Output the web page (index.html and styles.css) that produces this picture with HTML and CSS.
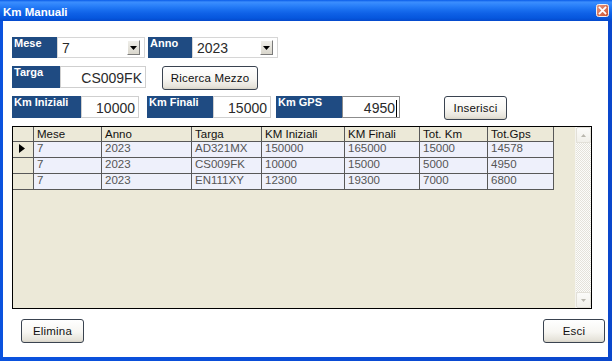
FILE: index.html
```html
<!DOCTYPE html>
<html>
<head>
<meta charset="utf-8">
<title>Km Manuali</title>
<link rel="stylesheet" href="styles.css">
</head>
<body>
<div class="window">
  <div class="titlebar">
    <span class="title">Km Manuali</span>
    <span class="close">
      <svg width="13" height="13" viewBox="0 0 13 13">
        <defs>
          <linearGradient id="cg" x1="0" y1="0" x2="1" y2="1">
            <stop offset="0" stop-color="#E99A82"/>
            <stop offset="1" stop-color="#C9502F"/>
          </linearGradient>
        </defs>
        <rect x="0.5" y="0.5" width="12" height="12" rx="2" fill="url(#cg)" stroke="#F4F0EE"/>
        <path d="M3.6 3.6 L9.4 9.4 M9.4 3.6 L3.6 9.4" stroke="#fff" stroke-width="1.8" stroke-linecap="square"/>
      </svg>
    </span>
  </div>
  <div class="client">
    <div class="row row1">
      <div class="label lb-mese">Mese</div>
      <div class="combo cb-mese">
        <span class="val">7</span>
        <span class="dd"><svg width="7" height="4" viewBox="0 0 7 4"><polygon points="0,0 7,0 3.5,4" fill="#000"/></svg></span>
      </div>
      <div class="label lb-anno">Anno</div>
      <div class="combo cb-anno">
        <span class="val">2023</span>
        <span class="dd"><svg width="7" height="4" viewBox="0 0 7 4"><polygon points="0,0 7,0 3.5,4" fill="#000"/></svg></span>
      </div>
    </div>
    <div class="row row2">
      <div class="label lb-targa">Targa</div>
      <div class="field fd-targa">CS009FK</div>
      <div class="btn bt-ricerca">Ricerca Mezzo</div>
    </div>
    <div class="row row3">
      <div class="label lb-kmi">Km Iniziali</div>
      <div class="field fd-km">10000</div>
      <div class="label lb-kmf">Km Finali</div>
      <div class="field fd-km">15000</div>
      <div class="label lb-gps">Km GPS</div>
      <div class="field fd-km fd-gps">4950<span class="caret"></span></div>
      <div class="btn bt-inserisci">Inserisci</div>
    </div>
    <div class="grid">
      <div class="gtable">
        <div class="hc rh"></div>
        <div class="hc">Mese</div>
        <div class="hc">Anno</div>
        <div class="hc">Targa</div>
        <div class="hc">KM Iniziali</div>
        <div class="hc">KM Finali</div>
        <div class="hc">Tot. Km</div>
        <div class="hc">Tot.Gps</div>

        <div class="dc rh"><svg class="cur" width="6" height="9" viewBox="0 0 6 9"><polygon points="0,0 6,4.5 0,9" fill="#000"/></svg></div>
        <div class="dc">7</div>
        <div class="dc">2023</div>
        <div class="dc">AD321MX</div>
        <div class="dc">150000</div>
        <div class="dc">165000</div>
        <div class="dc">15000</div>
        <div class="dc">14578</div>

        <div class="dc rh"></div>
        <div class="dc">7</div>
        <div class="dc">2023</div>
        <div class="dc">CS009FK</div>
        <div class="dc">10000</div>
        <div class="dc">15000</div>
        <div class="dc">5000</div>
        <div class="dc">4950</div>

        <div class="dc rh"></div>
        <div class="dc">7</div>
        <div class="dc">2023</div>
        <div class="dc">EN111XY</div>
        <div class="dc">12300</div>
        <div class="dc">19300</div>
        <div class="dc">7000</div>
        <div class="dc">6800</div>
      </div>
      <div class="gspace"></div>
      <div class="vscroll">
        <div class="sbtn"><svg width="5" height="3" viewBox="0 0 5 3"><polygon points="0,3 5,3 2.5,0" fill="#B9B7AE"/></svg></div>
        <div class="strack"></div>
        <div class="sbtn"><svg width="5" height="3" viewBox="0 0 5 3"><polygon points="0,0 5,0 2.5,3" fill="#B9B7AE"/></svg></div>
      </div>
    </div>
    <div class="btnrow">
      <div class="btn bt-elimina">Elimina</div>
      <div class="btn bt-esci">Esci</div>
    </div>
  </div>
</div>
</body>
</html>
```

FILE: styles.css
```css
html, body {
  margin: 0;
  padding: 0;
}
body {
  width: 612px;
  height: 361px;
  overflow: hidden;
  font-family: "Liberation Sans", Arial, sans-serif;
}
.window {
  width: 612px;
  height: 361px;
  display: flex;
  flex-direction: column;
  background: linear-gradient(90deg, #0A52DE 0%, #0A4CD6 50%, #0A47CC 100%);
}
.titlebar {
  height: 21px;
  flex: none;
  display: flex;
  justify-content: space-between;
  align-items: flex-start;
  padding: 0 3px;
  background: linear-gradient(180deg, #0A5CE8 0%, #3C8EFD 10%, #2C82FA 25%, #1A70F0 45%, #0E60E6 65%, #0657DE 85%, #0449CC 100%);
}
.title {
  color: #fff;
  font-weight: bold;
  font-size: 11.5px;
  line-height: 18px;
  padding-top: 3px;
}
.close {
  margin-top: 4px;
  width: 13px;
  height: 13px;
}
.close svg {
  display: block;
}
.client {
  flex: 1;
  background: #fff;
  margin: 0 4px 4px 3px;
  padding: 16px 0 0 9px;
  display: flex;
  flex-direction: column;
}
.row {
  display: flex;
  align-items: flex-start;
}
.row2 {
  margin-top: 8px;
}
.row3 {
  margin-top: 6px;
}
.label {
  box-sizing: border-box;
  background: #1F4B82;
  color: #fff;
  font-weight: bold;
  font-size: 11px;
  line-height: 13px;
  padding: 0 2px;
  height: 22px;
}
.lb-mese { width: 45px; height: 21px; }
.lb-anno { width: 44px; height: 21px; margin-left: 3px; }
.lb-targa { width: 48px; }
.lb-kmi { width: 69px; }
.lb-kmf { width: 66px; margin-left: 8px; }
.lb-gps { width: 66px; margin-left: 5px; }

.combo {
  box-sizing: border-box;
  display: flex;
  align-items: flex-start;
  background: #fff;
  border: 1px solid #D6D6D6;
  height: 21px;
}
.cb-mese { width: 88px; }
.cb-anno { width: 86px; }
.combo .val {
  flex: 1;
  font-size: 14px;
  line-height: 18px;
  padding: 1px 0 0 4px;
  color: #2A2A2A;
}
.dd {
  box-sizing: border-box;
  width: 13px;
  height: 15px;
  margin: 2px 4px 0 0;
  border: 1px solid;
  border-color: #fff #7A7A7A #7A7A7A #fff;
  background: linear-gradient(#F0EFEA, #D9D6CC);
  display: flex;
  align-items: center;
  justify-content: center;
}
.dd svg {
  display: block;
}
.field {
  box-sizing: border-box;
  background: #fff;
  border: 1px solid #CFCFCF;
  height: 22px;
  font-size: 14px;
  line-height: 18px;
  padding: 2px 3px 0 0;
  text-align: right;
  color: #2A2A2A;
  white-space: nowrap;
}
.fd-targa { width: 86px; }
.fd-km { width: 58px; }
.fd-gps {
  border-color: #8C8C8C;
  padding-right: 2px;
}
.caret {
  display: inline-block;
  width: 1px;
  height: 17px;
  background: #000;
  vertical-align: -4px;
  margin-left: 1px;
}
.btn {
  box-sizing: border-box;
  height: 24px;
  border: 1px solid #3A4350;
  border-radius: 3px;
  background: linear-gradient(180deg, #FFFFFF 0%, #F7F6F2 55%, #E6E3DA 90%, #D6D2C6 100%);
  font-size: 11.5px;
  letter-spacing: 0.2px;
  color: #111;
  display: flex;
  align-items: center;
  justify-content: center;
}
.bt-ricerca { width: 96px; margin-left: 16px; }
.bt-inserisci { width: 63px; margin-left: 44px; }
.bt-elimina { width: 63px; }
.bt-esci { width: 62px; }

.grid {
  margin-top: 6px;
  width: 580px;
  height: 183px;
  box-sizing: border-box;
  border: 1px solid #000;
  background: #ECE9D8;
  display: flex;
}
.gtable {
  flex: none;
  width: 541px;
  display: grid;
  grid-template-columns: 21px 68px 90px 70px 83px 75px 68px 66px;
  grid-template-rows: 15px;
  grid-auto-rows: 16px;
  align-content: start;
}
.hc, .dc {
  box-sizing: border-box;
  border-right: 1px solid #585858;
  border-bottom: 1px solid #585858;
  padding-left: 3px;
  font-size: 11.5px;
  white-space: nowrap;
  overflow: hidden;
}
.hc {
  background: #ECE9D8;
  color: #111;
  line-height: 14px;
}
.dc {
  background: #EEF0FB;
  color: #555;
  line-height: 13px;
}
.dc.rh, .hc.rh {
  background: #ECE9D8;
}
.cur {
  display: block;
  margin: 2px 0 0 3px;
}
.gspace {
  flex: 1;
}
.vscroll {
  width: 15px;
  flex: none;
  display: flex;
  flex-direction: column;
  background: repeating-conic-gradient(#E4E2DA 0 25%, #FCFCFA 0 50%) 0 0 / 2px 2px;
  border-left: 1px solid #F4F3EE;
}
.sbtn {
  box-sizing: border-box;
  height: 16px;
  background: linear-gradient(#FBFBF9, #F1F0EA);
  border: 1px solid #E2E0D8;
  border-radius: 2px;
  display: flex;
  align-items: center;
  justify-content: center;
}
.sbtn svg {
  display: block;
}
.strack {
  flex: 1;
}
.btnrow {
  display: flex;
  justify-content: space-between;
  margin: 10px 3px 0 9px;
}
```
